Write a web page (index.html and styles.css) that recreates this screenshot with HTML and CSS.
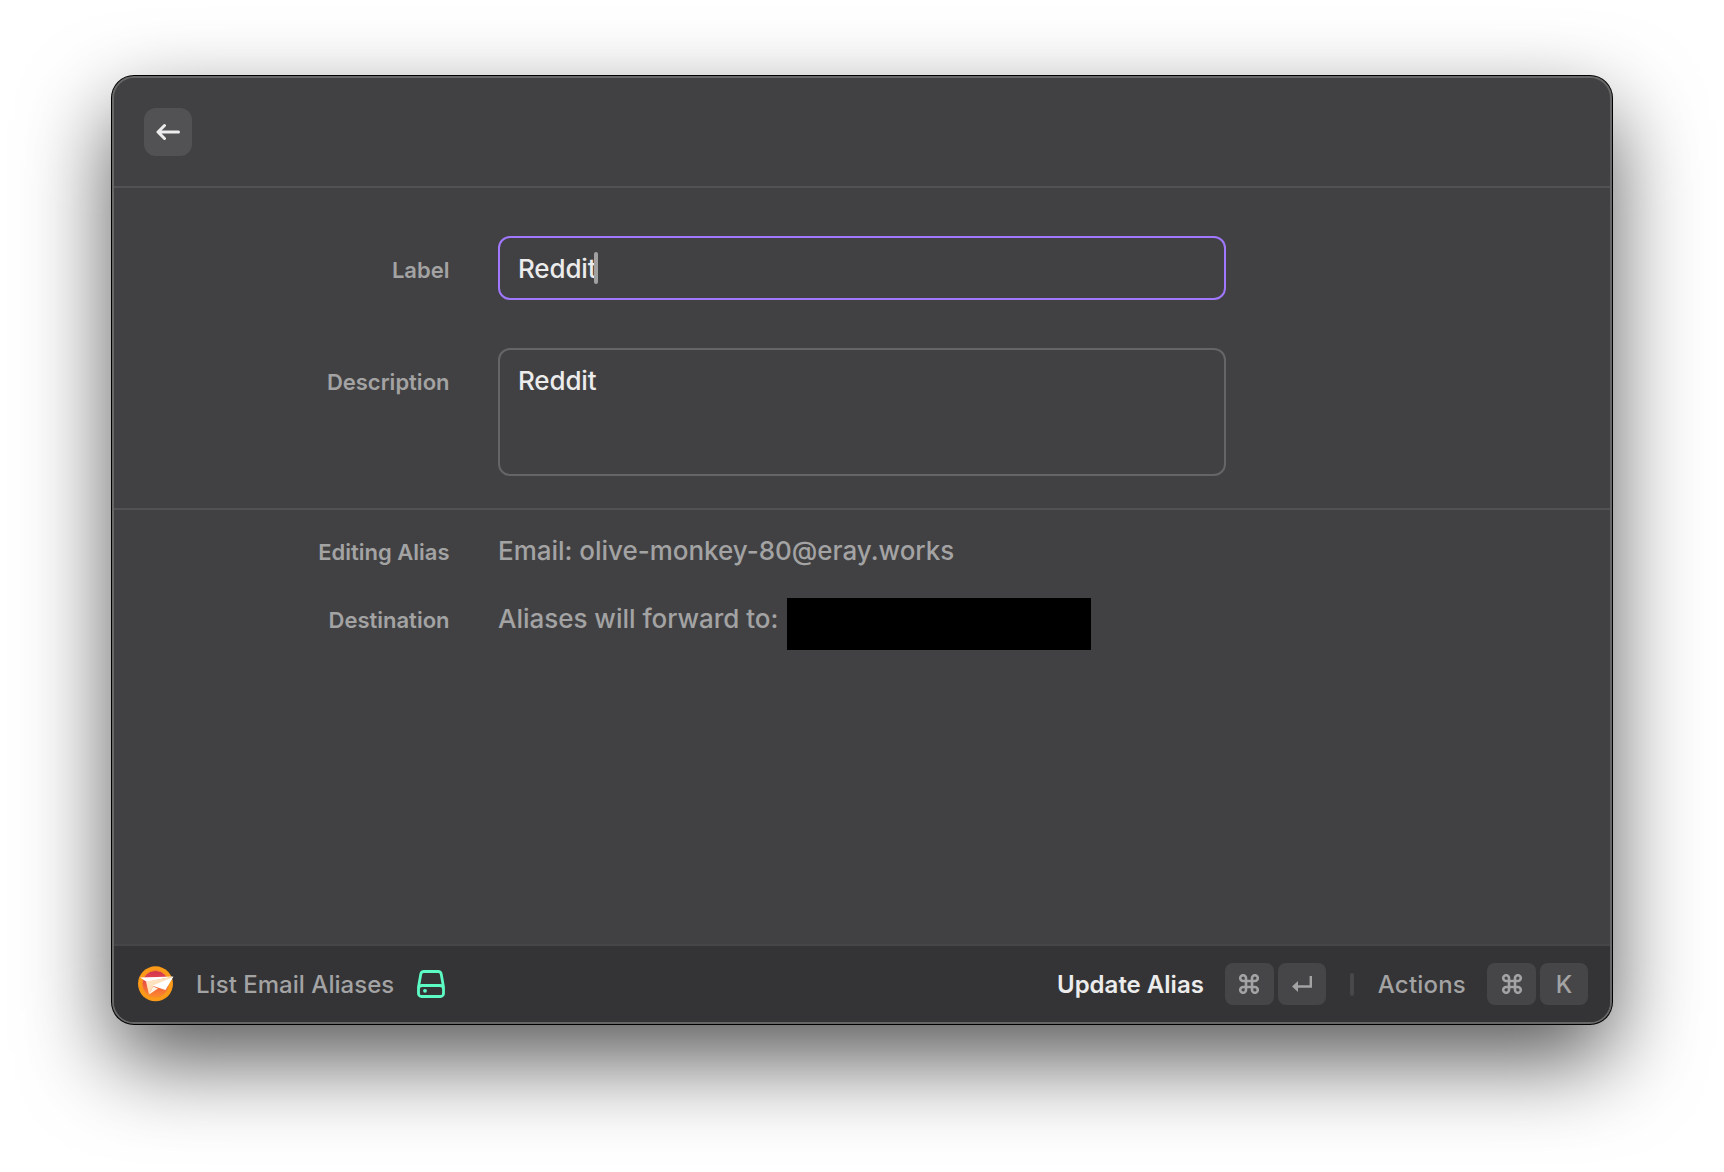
FILE: index.html
```html
<!DOCTYPE html>
<html lang="en">
<head>
<meta charset="utf-8">
<title>Edit Alias</title>
<link rel="stylesheet" href="styles.css">
</head>
<body>
<main class="window">
  <header class="header">
    <button class="back" aria-label="Back">
      <svg width="24" height="18" viewBox="0 0 24 18" fill="none" stroke="currentColor" stroke-width="3" stroke-linecap="round" stroke-linejoin="round"><path d="M22.500 9H2.500M8.500 2.500 2 9l6.500 6.500"/></svg>
    </button>
  </header>
  <section class="fields">
    <div class="row">
      <label class="name" for="label">Label</label>
      <div class="input input-focused" id="label"><span class="value">Reddit</span><span class="caret"></span></div>
    </div>
    <div class="row">
      <label class="name" for="desc">Description</label>
      <div class="input input-tall" id="desc"><span class="value">Reddit</span></div>
    </div>
  </section>
  <section class="info">
    <div class="row">
      <span class="name name-info">Editing Alias</span>
      <span class="text">Email: olive-monkey-80@eray.works</span>
    </div>
    <div class="row">
      <span class="name name-info">Destination</span>
      <span class="text">Aliases will forward to:<span class="redacted"></span></span>
    </div>
  </section>
  <footer class="footer">
    <svg class="logo" width="36" height="36" viewBox="0 0 36 36">
      <defs>
        <linearGradient id="disc" x1="0" y1="0" x2="0" y2="1"><stop offset="0" stop-color="#cf3350"/><stop offset=".35" stop-color="#e5484a"/><stop offset="1" stop-color="#ff8a2a"/></linearGradient>
        <linearGradient id="fold" x1="0" y1="0" x2="1" y2="1"><stop offset="0" stop-color="#ffe9cf"/><stop offset="1" stop-color="#ffd29a"/></linearGradient>
      </defs>
      <circle cx="17.500" cy="17.800" r="17.500" fill="#fb9a18"/>
      <circle cx="17.500" cy="17.800" r="13.300" fill="url(#disc)" stroke="#f58a2c" stroke-width="1"/>
      <path d="M2 11.500 35.500 10.500 9 16z" fill="#fff"/>
      <path d="M8 15.500 35.500 10.500 15 20.500 11 28.500z" fill="url(#fold)"/>
      <path d="M11 28.500 15 20.500 20 22.500z" fill="#fff3e4"/>
      <path d="M14.500 19.700 35.500 10.500 27.500 24z" fill="#fff"/>
    </svg>
    <span class="command">List Email Aliases</span>
    <svg class="drive" width="28" height="28" viewBox="0 0 28 28" fill="none" stroke="currentColor" stroke-width="2.800" stroke-linejoin="round"><path d="M1.500 17V23.500a3 3 0 0 0 3 3h19a3 3 0 0 0 3-3V17L24.200 4a3.200 3.200 0 0 0-3.100-2.500H6.900A3.200 3.200 0 0 0 3.800 4zM1.500 19a3.500 3.500 0 0 1 3.500-3.500h18a3.500 3.500 0 0 1 3.500 3.500"/><circle cx="8" cy="20.800" r="1.900" fill="currentColor" stroke="none"/></svg>
    <div class="actions">
      <span class="action action-primary">Update Alias</span>
      <span class="keys">
        <kbd class="key"><svg width="20" height="20" viewBox="0 0 20 20" fill="none" stroke="currentColor" stroke-width="2.600"><path d="M7 7h6v6H7zM7 7H4.100A2.900 2.900 0 1 1 7 4.100zM13 7V4.100A2.900 2.900 0 1 1 15.900 7zM13 13h2.900A2.900 2.900 0 1 1 13 15.900zM7 13v2.900A2.900 2.900 0 1 1 4.100 13z"/></svg></kbd>
        <kbd class="key"><svg width="20" height="17" viewBox="0 0 20 17"><path d="M18.800 0V10.500H5" fill="none" stroke="currentColor" stroke-width="2.400"/><path d="M0 10.500 6 5v11z" fill="currentColor"/></svg></kbd>
      </span>
      <span class="separator"></span>
      <span class="action action-menu">Actions</span>
      <span class="keys">
        <kbd class="key"><svg width="20" height="20" viewBox="0 0 20 20" fill="none" stroke="currentColor" stroke-width="2.600"><path d="M7 7h6v6H7zM7 7H4.100A2.900 2.900 0 1 1 7 4.100zM13 7V4.100A2.900 2.900 0 1 1 15.900 7zM13 13h2.900A2.900 2.900 0 1 1 13 15.900zM7 13v2.900A2.900 2.900 0 1 1 4.100 13z"/></svg></kbd>
        <kbd class="key">K</kbd>
      </span>
    </div>
  </footer>
</main>
</body>
</html>
```

FILE: styles.css
```css
* { box-sizing: border-box; }

body {
  margin: 0;
  padding: 76px 112px 148px;
  height: 1172px;
  background: #fff;
  font-family: Inter, "Liberation Sans", sans-serif;
  overflow: hidden;
}

.window {
  display: flex;
  flex-direction: column;
  width: 1500px;
  height: 948px;
  border: 2px solid #676768;
  border-radius: 22px;
  background: #414143;
  box-shadow: 0 0 0 1px #000, 0 36px 88px rgba(0, 0, 0, .66);
  overflow: hidden;
}

.header {
  display: flex;
  align-items: center;
  height: 110px;
  padding-left: 30px;
  border-bottom: 2px solid #525254;
}

.back {
  display: flex;
  align-items: center;
  justify-content: center;
  width: 48px;
  height: 48px;
  padding: 0;
  border: 0;
  border-radius: 12px;
  background: #525254;
  color: #ececec;
}

.fields {
  display: flex;
  flex-direction: column;
  gap: 48px;
  padding: 48px 0 32px;
  border-bottom: 2px solid #525254;
}

.row {
  display: grid;
  grid-template-columns: 335.5px 728px;
  column-gap: 48.5px;
}

.name {
  padding-top: 16px;
  color: #a3a3a4;
  font-size: 22px;
  font-weight: 600;
  line-height: 36px;
  text-align: right;
}

.name-info { padding-top: 0; }

.input {
  display: flex;
  align-items: flex-start;
  height: 64px;
  padding: 14px 18px;
  border: 2px solid #656567;
  border-radius: 12px;
  color: #ececec;
  font-size: 26px;
  font-weight: 450;
  letter-spacing: -.15px;
  line-height: 34px;
}

.input-focused { border-color: #a077ff; }

.input-tall { height: 128px; }

.caret {
  width: 4px;
  height: 32px;
  margin-left: -2px;
  border-radius: 2px;
  background: #a0a0a1;
}

.info {
  display: flex;
  flex-direction: column;
  flex: 1;
  gap: 36px;
  padding-top: 24px;
}

.info .row { height: 32px; }

.text {
  display: flex;
  color: #a3a3a4;
  font-size: 26px;
  font-weight: 450;
  letter-spacing: -.02px;
  line-height: 34px;
  white-space: nowrap;
}

.redacted {
  width: 304px;
  height: 52px;
  margin: -4px 0 0 9px;
  background: #000;
}

.footer {
  display: flex;
  align-items: center;
  height: 78px;
  padding: 0 22px 0 24px;
  border-top: 2px solid #464648;
  background: #343436;
  color: #a3a3a4;
  font-size: 24px;
  font-weight: 500;
  white-space: nowrap;
}

.command {
  margin-left: 22px;
  letter-spacing: .03px;
}

.drive {
  margin-left: 23px;
  color: #5dfbc4;
}

.actions {
  display: flex;
  align-items: center;
  margin-left: auto;
}

.action-primary {
  color: #ececec;
  font-weight: 600;
}

.action-menu { letter-spacing: .2px; }

.keys {
  display: flex;
  gap: 4px;
  margin-left: 21px;
}

.key {
  display: flex;
  align-items: center;
  justify-content: center;
  width: 49px;
  height: 42px;
  border-radius: 8px;
  background: #464648;
  font: inherit;
}

.key + .key { width: 48px; }

.separator {
  width: 4px;
  height: 23px;
  margin: 0 24px;
  border-radius: 2px;
  background: #48484a;
}
```
